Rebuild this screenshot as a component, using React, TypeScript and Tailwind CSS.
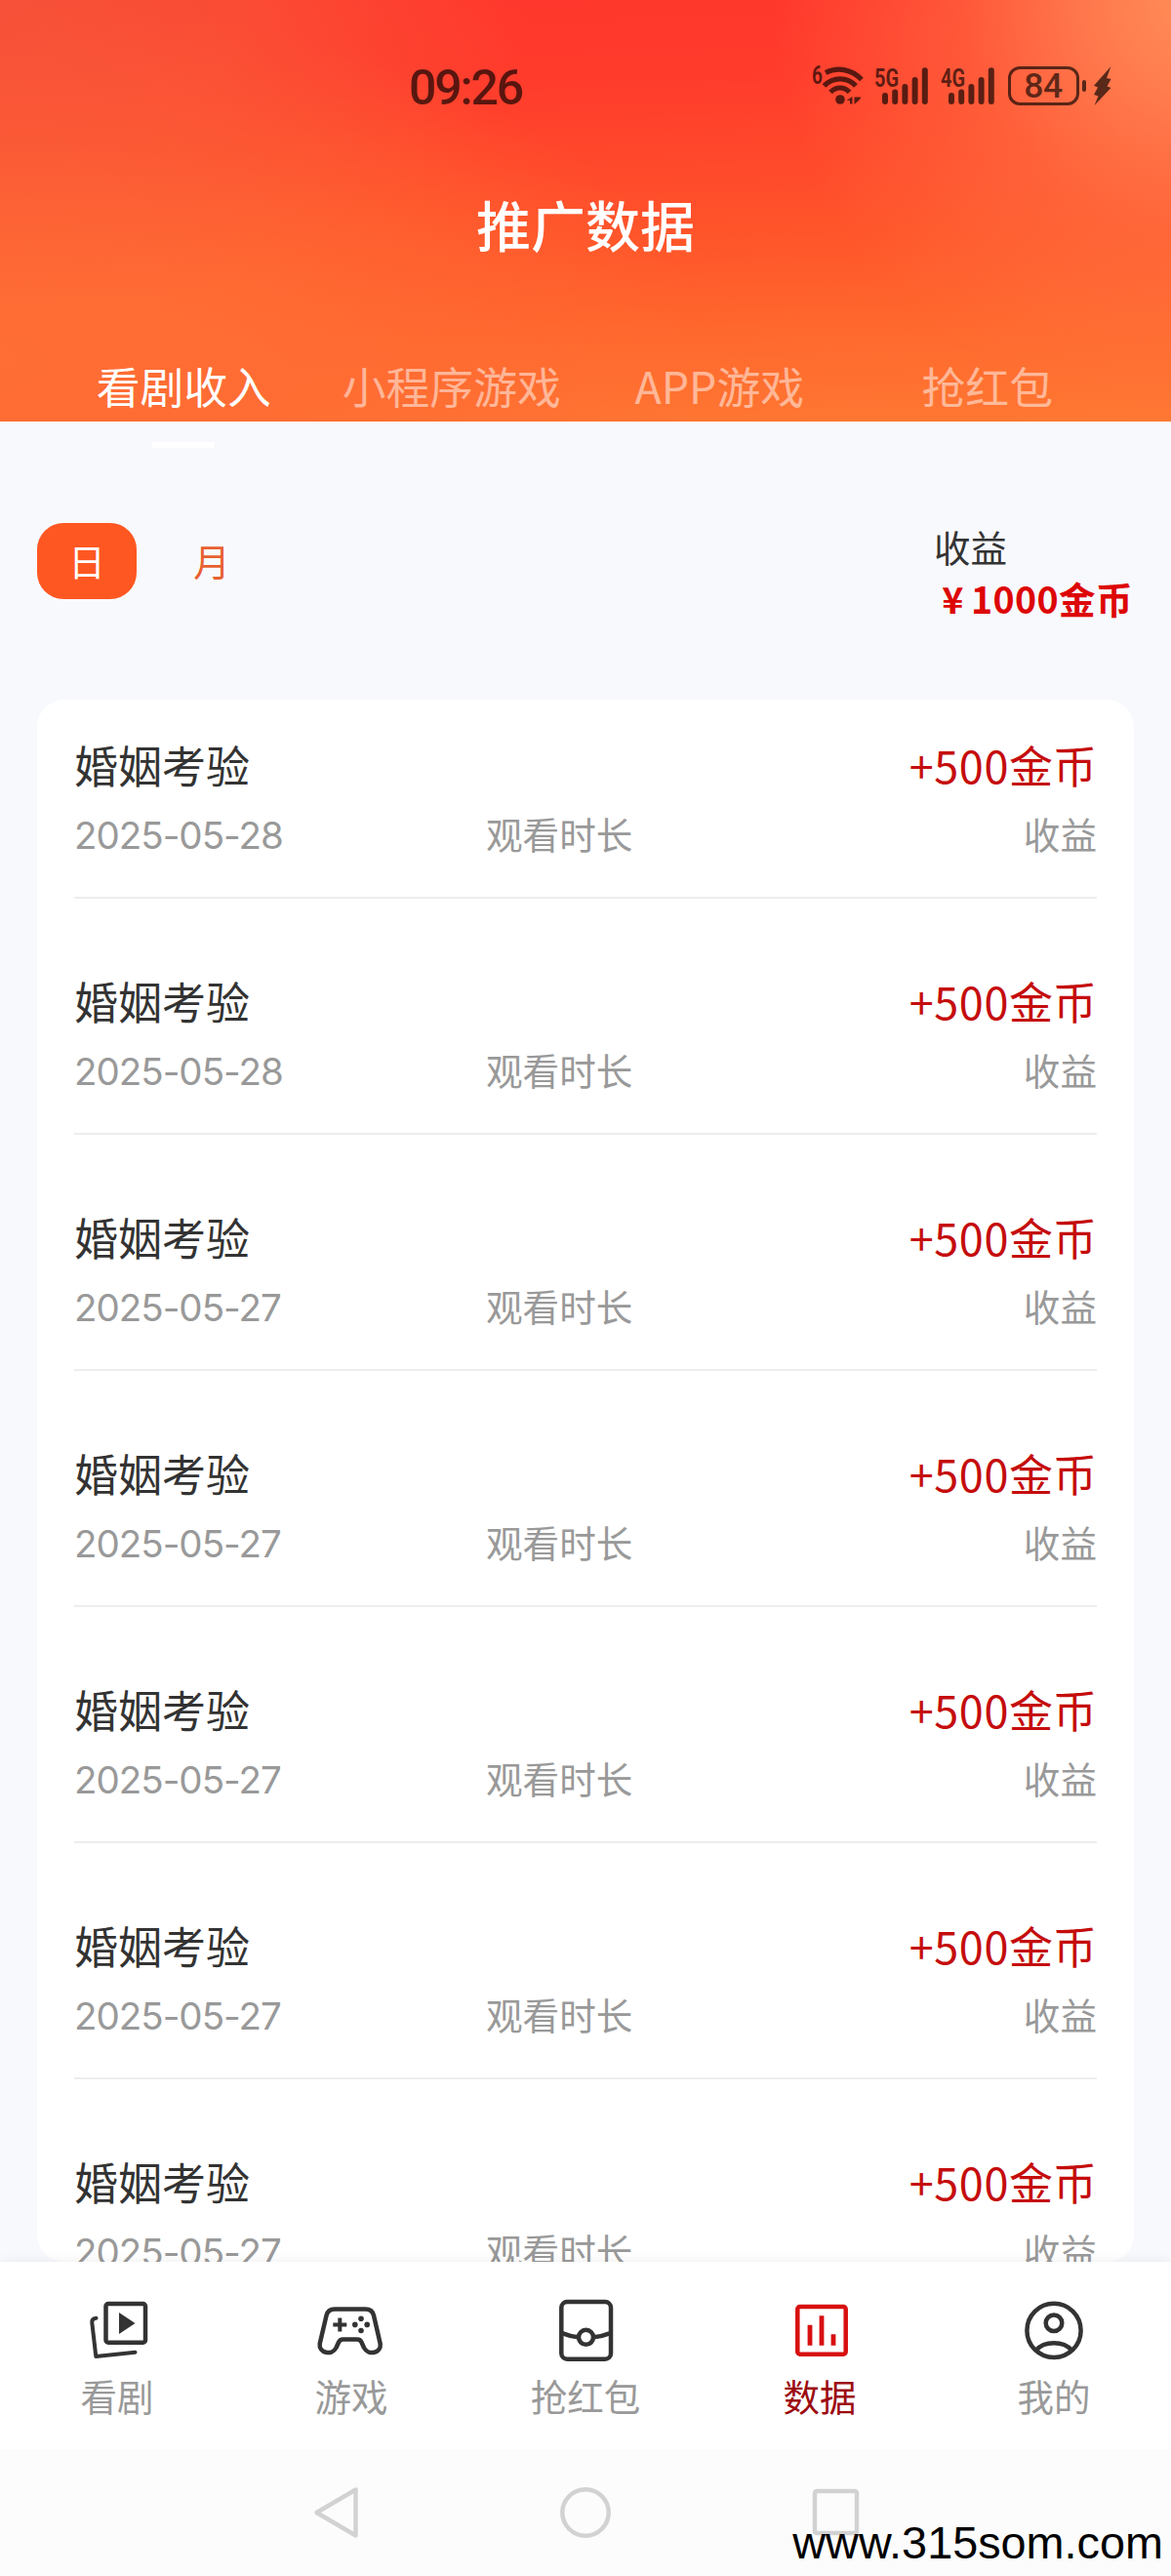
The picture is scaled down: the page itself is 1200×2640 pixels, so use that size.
import { useState, type ReactNode } from "react";
import clsx from "clsx";

const TABS = ["看剧收入", "小程序游戏", "APP游戏", "抢红包"];

const RECORDS = [
  { id: 1, title: "婚姻考验", date: "2025-05-28", amount: "+500" },
  { id: 2, title: "婚姻考验", date: "2025-05-28", amount: "+500" },
  { id: 3, title: "婚姻考验", date: "2025-05-27", amount: "+500" },
  { id: 4, title: "婚姻考验", date: "2025-05-27", amount: "+500" },
  { id: 5, title: "婚姻考验", date: "2025-05-27", amount: "+500" },
  { id: 6, title: "婚姻考验", date: "2025-05-27", amount: "+500" },
  { id: 7, title: "婚姻考验", date: "2025-05-27", amount: "+500" },
];

function SignalBars() {
  return (
    <svg width="48" height="40" viewBox="0 0 48 40" fill="currentColor">
      <rect x="0" y="27" width="6" height="12" rx="3" />
      <rect x="10.2" y="23.5" width="6" height="15.5" rx="3" />
      <rect x="20.4" y="18" width="6" height="21" rx="3" />
      <rect x="30.6" y="11" width="6" height="28" rx="3" />
      <rect x="40.8" y="1.2" width="6" height="37.8" rx="3" />
    </svg>
  );
}

function Signal({ label }: { label: string }) {
  return (
    <div className="relative">
      <span className="absolute -left-[8px] top-0 origin-left scale-x-[0.8] text-[25px] font-bold leading-[26px]">
        {label}
      </span>
      <SignalBars />
    </div>
  );
}

function StatusBar() {
  return (
    <div className="flex h-[176px] items-center font-['Roboto',sans-serif] text-black/65">
      <span className="ml-[419px] mt-[3px] text-[50px] font-medium leading-[60px] tracking-[-2.2px]">09:26</span>
      <div className="ml-auto flex items-center pr-[61px]">
        <div className="relative">
          <span className="absolute -top-[3px] left-0 origin-left scale-x-[0.76] text-[25px] font-bold leading-[26px]">
            6
          </span>
          <svg width="56" height="40" viewBox="831 68 56 40" fill="none" stroke="currentColor" strokeWidth="5.2">
            <path d="M845 74.5C857 68.5 871 70.5 882 81.5" />
            <path d="M843.5 88C853 78.5 867 78.5 876 88" />
            <path d="M850 94.5C856 88.5 864 88.5 869.5 94.5" />
            <circle cx="860" cy="102" r="4.8" fill="currentColor" stroke="none" />
            <path d="M866.5 103l6-4v7.5h-2.5v-3.500zM874.5 99.500h7l-2 3-5 4.500z" fill="currentColor" stroke="none" />
          </svg>
        </div>
        <div className="ml-[15.5px]">
          <Signal label="5G" />
        </div>
        <div className="ml-[20px]">
          <Signal label="4G" />
        </div>
        <div className="ml-[13px] flex h-[40px] w-[73px] items-center justify-center rounded-[12px] border-[3px] border-current text-[35.5px] font-medium leading-[36px] tracking-[-0.5px]">
          84
        </div>
        <div className="ml-[3px] h-[12px] w-[4.5px] rounded-full bg-current" />
        <svg className="ml-[8px]" width="18" height="40" viewBox="0 0 18 40" fill="currentColor">
          <path d="M17.5 0L0 19.700 4 21.500 0 29 4.500 30.500 0.500 40 17.500 22 13.500 20.500 17.500 13 13 12z" />
        </svg>
      </div>
    </div>
  );
}

function NavIcon({ children }: { children: ReactNode }) {
  return (
    <svg
      width="72"
      height="72"
      viewBox="0 0 72 72"
      fill="none"
      stroke="currentColor"
      strokeWidth="4.5"
      strokeLinecap="round"
      strokeLinejoin="round"
    >
      {children}
    </svg>
  );
}

const NAV = [
  {
    label: "看剧",
    icon: (
      <NavIcon>
        <rect x="24.5" y="9" width="40.5" height="39.7" rx="2.5" />
        <path d="M38 18l16.5 11-16.5 11z" fill="currentColor" stroke="none" />
        <path d="M14.5 23.800Q9.800 24.500 10.300 28.500L14.300 63 54.500 58.700" strokeWidth="4" />
      </NavIcon>
    ),
  },
  {
    label: "游戏",
    icon: (
      <NavIcon>
        <path d="M19 14.500H50.500Q57.500 14.500 59 21L65.700 50C67 59.500 53.500 62.500 49 54L46.500 48.500Q45.300 45.500 42 45.500H27.500Q24.300 45.500 23 48.500L20.500 54C16 62.500 2.500 59.500 3.700 50L10.500 21Q12 14.500 19 14.500Z" />
        <path d="M24.300 23.500v14M17.300 30.500h14" strokeWidth="4" strokeLinecap="butt" />
        <g fill="currentColor" stroke="none">
          <circle cx="46" cy="24.3" r="2.8" />
          <circle cx="46" cy="36.5" r="2.8" />
          <circle cx="39.8" cy="30.4" r="2.8" />
          <circle cx="52.2" cy="30.4" r="2.8" />
        </g>
      </NavIcon>
    ),
  },
  {
    label: "抢红包",
    icon: (
      <NavIcon>
        <rect x="11.3" y="7" width="50.7" height="58.7" rx="6" />
        <circle cx="36.5" cy="43.3" r="7.5" />
        <path d="M12 39.200Q20 42.500 28.500 43.300M44.500 43.300Q53 42.500 61.500 39.200" />
      </NavIcon>
    ),
  },
  {
    label: "数据",
    active: true,
    icon: (
      <NavIcon>
        <rect x="13.3" y="12" width="49.4" height="48.7" rx="2.5" />
        <path d="M26 30.700v21M38 21.300v30.400M50 40.300v11.400" strokeLinecap="butt" strokeWidth="4.8" />
      </NavIcon>
    ),
  },
  {
    label: "我的",
    icon: (
      <NavIcon>
        <circle cx="36" cy="36.4" r="27.6" />
        <circle cx="36" cy="28.7" r="8.3" />
        <path d="M18 56.500C26 46.800 46 46.800 54 56.500" />
      </NavIcon>
    ),
  },
];

export default function App() {
  const [tab, setTab] = useState(0);
  const [range, setRange] = useState("日");

  return (
    <div className="flex h-[2640px] w-[1200px] flex-col overflow-hidden bg-[#f8f9fd] font-['Noto_Sans_CJK_SC',sans-serif] text-[#333]">
      <header className="h-[432px] shrink-0 bg-[radial-gradient(ellipse_36%_100%_at_102%_0%,#ff8e58_0%,#ff8453d9_25%,#ff764680_55%,#ff6a3800_100%),radial-gradient(ellipse_45%_75%_at_0%_0%,#f4583ccc_0%,#f85a3a99_45%,#ff5a3500_100%),radial-gradient(ellipse_60%_85%_at_0%_85%,#ff6e34_0%,#ff6c34e6_35%,#ff663200_100%),linear-gradient(178deg,#ff362c_0%,#ff3c2c_22%,#ff4a2b_42%,#ff562a_58%,#ff672d_76%,#ff7833_100%)]">
        <StatusBar />
        <h1 className="h-[104px] text-center text-[56px] font-medium leading-[105px] text-white">推广数据</h1>
        <nav className="mt-[83px] grid grid-cols-4 px-[51px]">
          {TABS.map((t, i) => (
            <button
              key={t}
              onClick={() => setTab(i)}
              className={clsx(
                "relative whitespace-nowrap text-center text-[44.8px] leading-[63px]",
                tab === i ? "text-white" : "text-white/50",
              )}
            >
              {t}
              {tab === i && <span className="absolute left-1/2 top-[90px] h-[6px] w-[64px] -translate-x-1/2 bg-white" />}
            </button>
          ))}
        </nav>
      </header>

      <section className="flex h-[285px] shrink-0 items-start justify-between px-[38px] pt-[102px] text-[37.5px]">
        <div className="mt-[2px] flex gap-[26px]">
          {["日", "月"].map((r) => (
            <button
              key={r}
              onClick={() => setRange(r)}
              className={clsx(
                "h-[78px] w-[102px] rounded-[27px] pb-[3px] leading-[75px]",
                range === r ? "bg-[#ff5722] text-white" : "text-[#e8602f]",
              )}
            >
              {r}
            </button>
          ))}
        </div>
        <div className="w-[205px] whitespace-nowrap leading-[52.5px]">
          <div>收益</div>
          <div className="ml-[1px] font-bold tracking-[0.4px] text-[#dd0606]">
            <span className="inline-block w-[37px] text-center">¥</span>1000金币
          </div>
        </div>
      </section>

      <main className="mx-[38px] h-[1601px] shrink-0 overflow-hidden rounded-[28px] bg-white px-[38px] pt-[35px]">
        {RECORDS.map((r) => (
          <div key={r.id} className="mb-[73px] h-[169px] border-b-2 border-[#ededed]">
            <div className="flex justify-between text-[45px] leading-[64px]">
              <span>{r.title}</span>
              <span className="text-[#c50d0d]">
                <span className="tracking-[0.6px]">{r.amount}</span>金币
              </span>
            </div>
            <div className="mt-[9.5px] flex text-[37.6px] leading-[56px] text-[#999]">
              <span className="mt-[2px] w-[422px] font-['Inter',sans-serif] text-[38.5px] tracking-[-1px]">{r.date}</span>
              <span>观看时长</span>
              <span className="ml-auto">收益</span>
            </div>
          </div>
        ))}
      </main>

      <footer className="relative shrink-0 bg-white shadow-[0_0_12px_rgba(0,0,0,0.07)]">
        <div className="grid h-[192px] grid-cols-5 pt-[34px]">
          {NAV.map((n) => (
            <div key={n.label} className={clsx("flex flex-col items-center", n.active && "text-[#d81010]")}>
              {n.icon}
              <span className={clsx("mt-[3px] text-[37.5px] leading-[56px]", n.active ? "text-[#9c0c10]" : "text-[#999]")}>
                {n.label}
              </span>
            </div>
          ))}
        </div>

        <div className="flex h-[130px] justify-center gap-[202px] bg-[#fcfcfc] pt-[37px]">
          <svg width="56" height="56" viewBox="0 0 56 56" fill="none" stroke="#d2d2d2" strokeWidth="4.5" strokeLinejoin="round">
            <path d="M50.5 4.5V51.500L10.500 28z" />
          </svg>
          <svg width="56" height="56" viewBox="0 0 56 56" fill="none" stroke="#d2d2d2" strokeWidth="4.5">
            <circle cx="28" cy="28" r="23.7" />
          </svg>
          <svg width="56" height="56" viewBox="0 0 56 56" fill="none" stroke="#d2d2d2" strokeWidth="4.5">
            <rect x="5" y="6" width="43" height="43" rx="2" />
          </svg>
        </div>
        <span className="absolute right-[8px] top-[261px] font-['Liberation_Sans',sans-serif] text-[46.8px] leading-[54px] text-black">
          www.315som.com
        </span>
      </footer>
    </div>
  );
}
